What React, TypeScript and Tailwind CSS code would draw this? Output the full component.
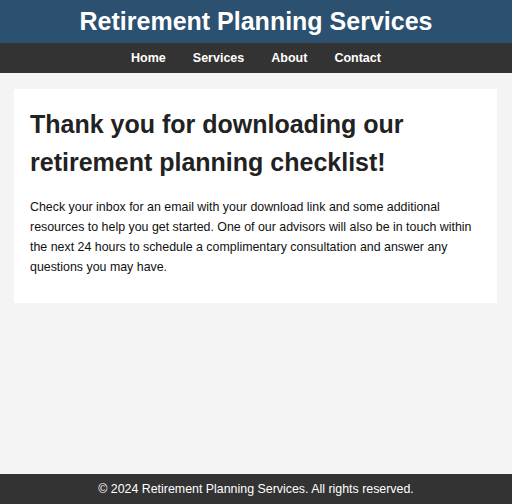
export default function App() {
  const links = ["Home", "Services", "About", "Contact"];
  return (
    <div
      className="min-h-screen bg-[#f4f4f4] flex flex-col"
      style={{ fontFamily: '"Liberation Sans", Arial, sans-serif' }}
    >
      <header className="bg-[#2b5070] h-[43px] flex items-center justify-center">
        <h1 className="text-white font-bold text-[25px] leading-none">Retirement Planning Services</h1>
      </header>
      <nav className="bg-[#333333] h-[30px] flex items-center justify-center gap-[27px]">
        {links.map((l) => (
          <a key={l} href="#" className="text-white font-bold text-[12.5px]">
            {l}
          </a>
        ))}
      </nav>
      <main className="flex-1 px-[14px] pt-[16px] pr-[15px]">
        <div className="bg-white p-4 pb-[26px]">
          <h2 className="text-[#222] font-bold text-[25px] leading-[38px]">
            Thank you for downloading our retirement planning checklist!
          </h2>
          <p className="mt-[16px] text-[12.4px] leading-[20px] text-[#111] pr-2">
            Check your inbox for an email with your download link and some additional resources to help you get
            started. One of our advisors will also be in touch within the next 24 hours to schedule a
            complimentary consultation and answer any questions you may have.
          </p>
        </div>
      </main>
      <footer className="bg-[#333333] h-[30px] flex items-center justify-center">
        <p className="text-white text-[12.4px]">© 2024 Retirement Planning Services. All rights reserved.</p>
      </footer>
    </div>
  );
}
